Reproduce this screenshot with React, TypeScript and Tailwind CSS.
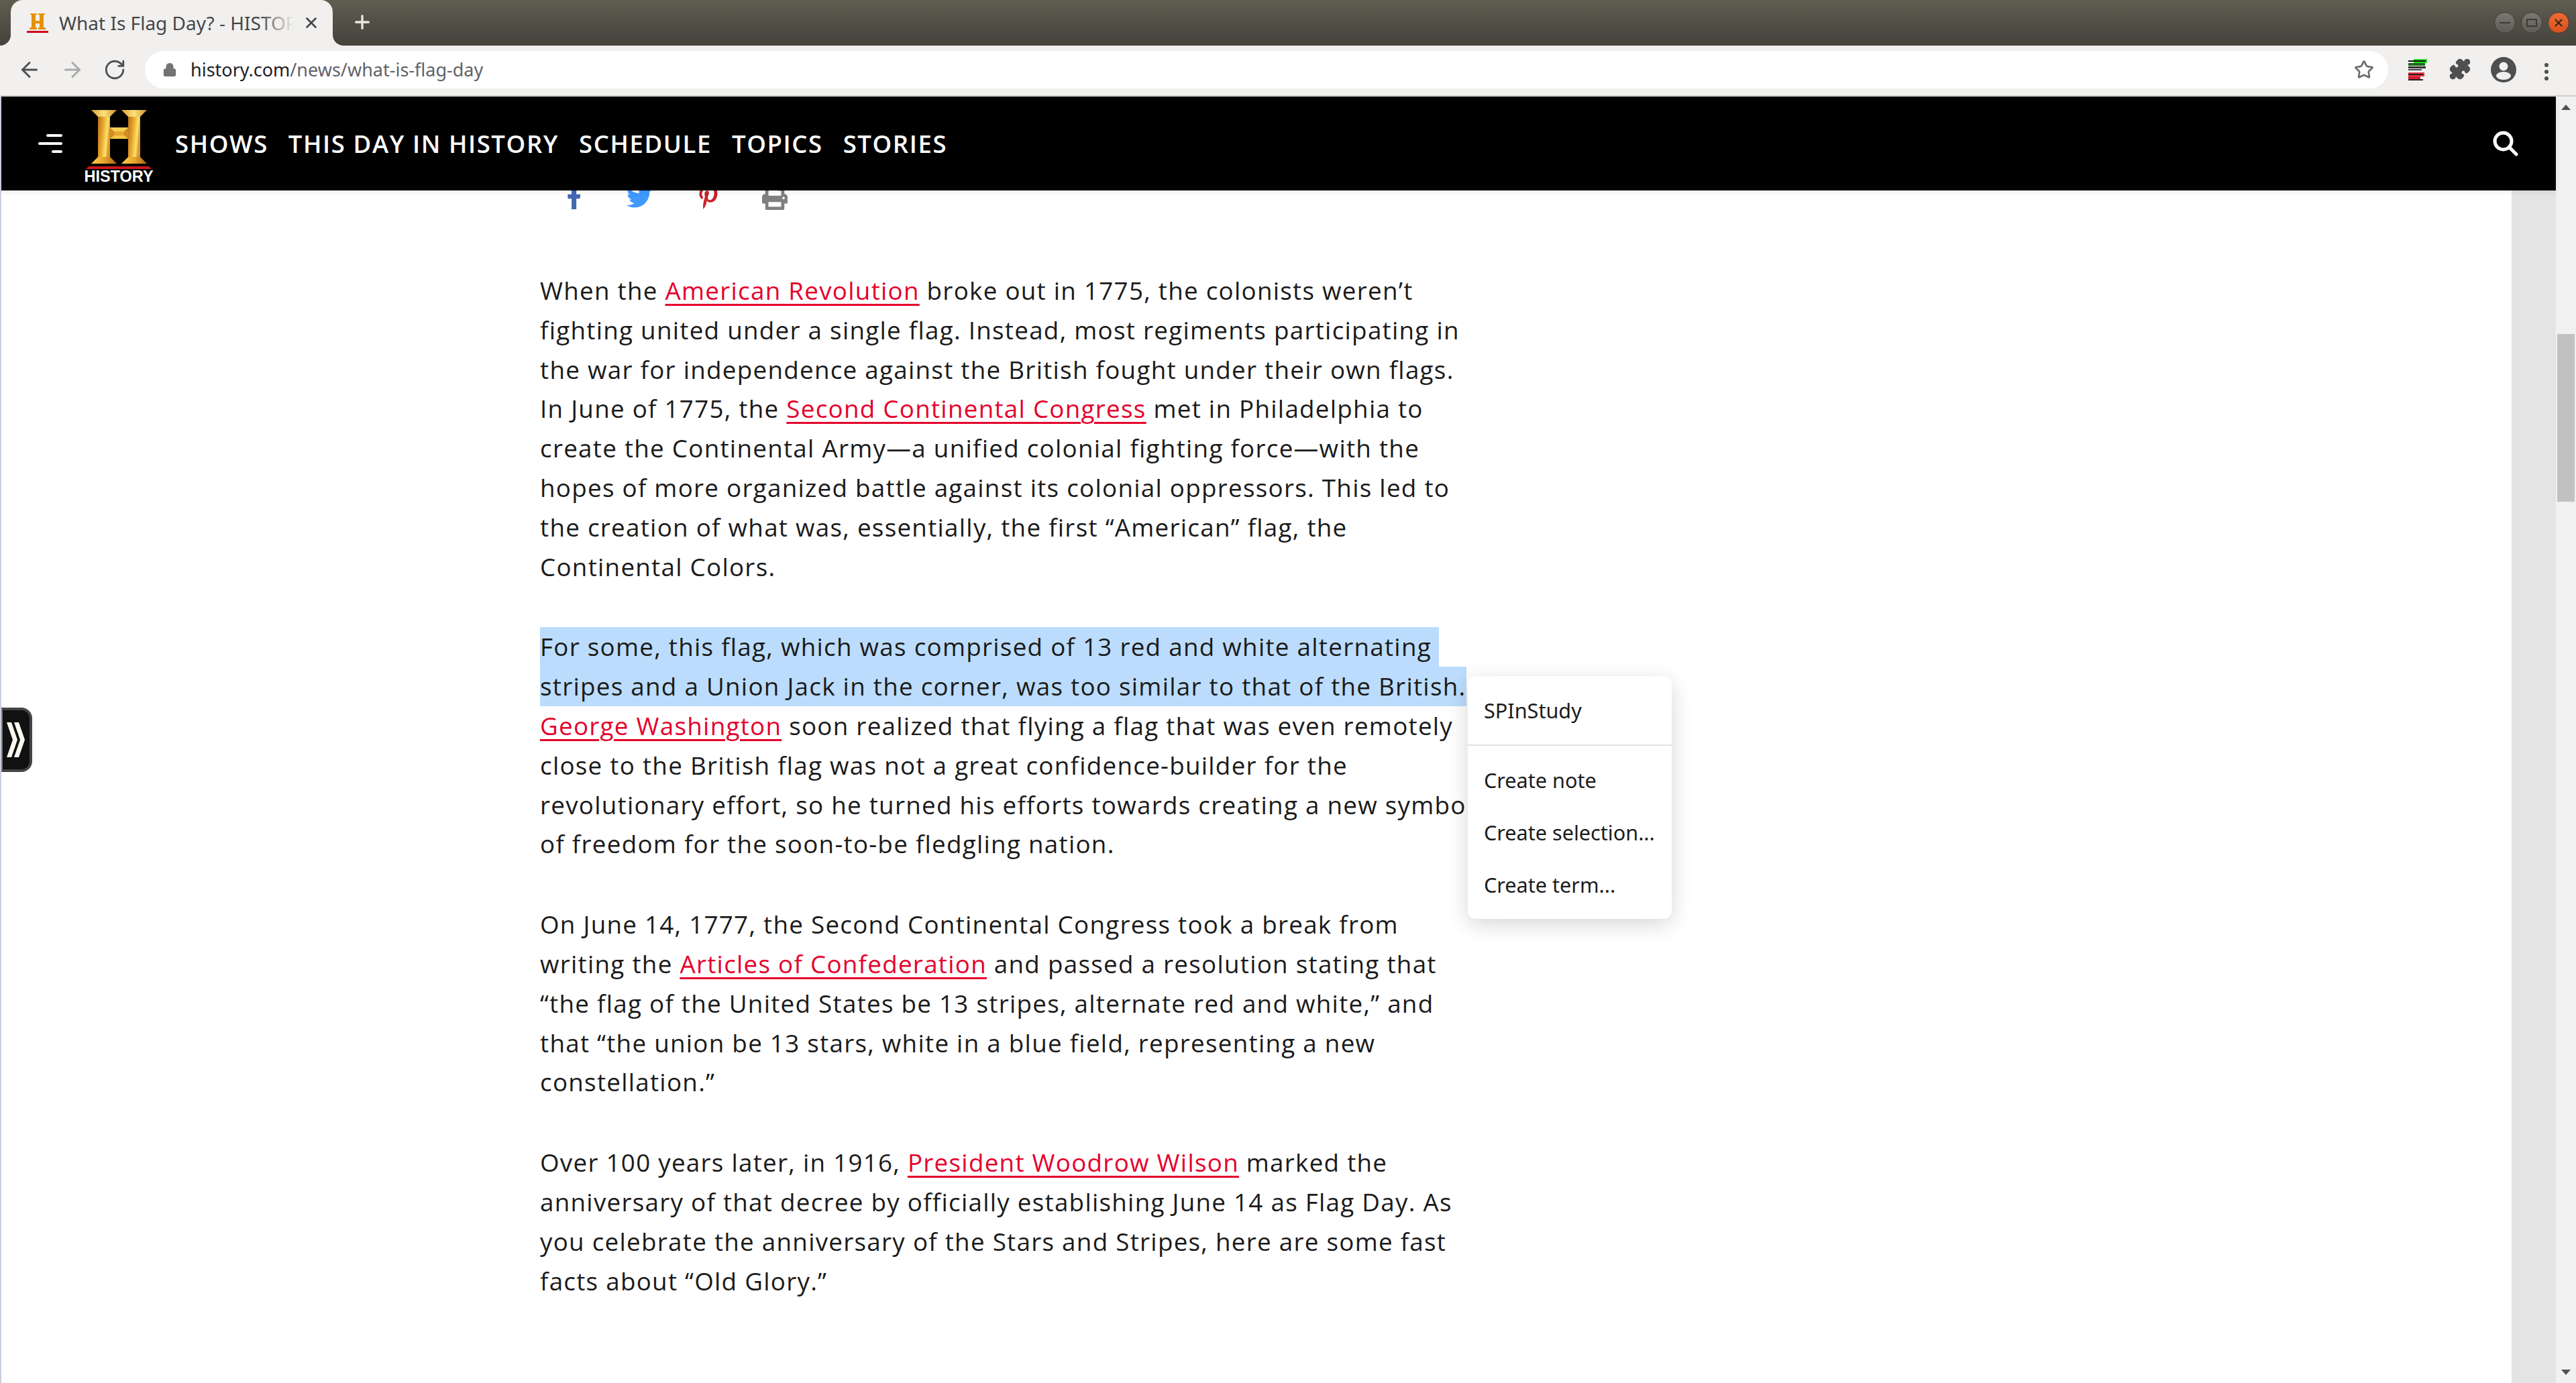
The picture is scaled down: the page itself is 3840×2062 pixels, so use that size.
import React from "react";
import { ArrowLeft, ArrowRight, RotateCw, Star, Plus, X, Lock, Puzzle } from "lucide-react";
import { FaFacebookF, FaTwitter, FaPinterestP, FaPrint } from "react-icons/fa";

const A = ({ children }: { children: React.ReactNode }) => (
  <a className="text-[#e4002b] underline decoration-[3px] underline-offset-[6px]">{children}</a>
);

function HistoryLogo() {
  return (
    <div className="flex flex-col items-center w-[106px]">
      <svg width="83" height="80" viewBox="0 0 83 80">
        <defs>
          <linearGradient id="stem" x1="0" y1="0" x2="1" y2="0.3">
            <stop offset="0" stopColor="#b8701a" />
            <stop offset="0.45" stopColor="#e8a62c" />
            <stop offset="0.8" stopColor="#fbe36a" />
            <stop offset="1" stopColor="#d9962a" />
          </linearGradient>
          <linearGradient id="top" x1="0" y1="0" x2="1" y2="0">
            <stop offset="0" stopColor="#e0a030" />
            <stop offset="0.5" stopColor="#fbe27a" />
            <stop offset="1" stopColor="#d08f2a" />
          </linearGradient>
          <linearGradient id="bot" x1="0" y1="0" x2="1" y2="0">
            <stop offset="0" stopColor="#fbd04a" />
            <stop offset="0.5" stopColor="#e8a52c" />
            <stop offset="1" stopColor="#a8651c" />
          </linearGradient>
        </defs>
        <polygon points="28,26 55,26 55,43 28,43" fill="#d28c24" />
        <polygon points="28,26 55,26 49,32 34,32" fill="#f6cf55" />
        <polygon points="34,38 49,38 55,43 28,43" fill="#f4c644" />
        <polygon points="34,32 49,32 49,38 34,38" fill="#e8a62c" />
        <rect x="10" y="10" width="18" height="60" fill="url(#stem)" />
        <rect x="55" y="10" width="18" height="60" fill="url(#stem)" />
        <polygon points="0,0 38,0 28,10 10,10" fill="url(#top)" />
        <polygon points="45,0 83,0 73,10 55,10" fill="url(#top)" />
        <polygon points="10,70 28,70 38,80 0,80" fill="url(#bot)" />
        <polygon points="55,70 73,70 83,80 45,80" fill="url(#bot)" />
      </svg>
      <svg width="98" height="4" viewBox="0 0 98 4" className="mt-1 block">
        <polygon points="4,0 94,0 98,4 0,4" fill="#c8171c" />
      </svg>
      <span className="font-['Liberation_Sans',sans-serif] font-bold text-[23.5px] leading-[20px] mt-[1px] text-white">HISTORY</span>
    </div>
  );
}

function NavBar() {
  return (
    <div className="relative z-10 h-[140px] shrink-0 bg-black flex items-center shadow-[0_4px_8px_rgba(0,0,0,0.06)]">
      <div className="ml-[55px] w-[36px] flex flex-col items-end gap-[8px]">
        <div className="h-[4px] w-[24px] rounded-full bg-white" />
        <div className="h-[4px] w-[36px] rounded-full bg-white" />
        <div className="h-[4px] w-[16px] rounded-full bg-white" />
      </div>
      <div className="ml-[31px] mt-[8px]">
        <HistoryLogo />
      </div>
      <nav className="ml-[31px] flex gap-[30px] font-['Open_Sans',sans-serif] font-semibold text-[36.5px] tracking-[1.6px] text-white">
        <span>SHOWS</span>
        <span>THIS DAY IN HISTORY</span>
        <span>SCHEDULE</span>
        <span>TOPICS</span>
        <span>STORIES</span>
      </nav>
      <svg className="ml-auto mr-[56px]" width="38" height="38" viewBox="0 0 38 38" fill="none" stroke="#fff" strokeLinecap="round">
        <circle cx="15.5" cy="15.5" r="12.5" strokeWidth="5" />
        <line x1="26" y1="26" x2="35" y2="35" strokeWidth="5" />
      </svg>
    </div>
  );
}

function TabStrip() {
  return (
    <div className="h-[68px] shrink-0 flex items-end bg-gradient-to-b from-[#605d50] to-[#44433c] font-['Noto_Sans',sans-serif]">
      <div className="relative ml-[16px] w-[480px] h-[68px] bg-[#f1f0ee] rounded-t-[18px] flex items-center">
        <svg className="absolute -left-[16px] bottom-0" width="16" height="16" viewBox="0 0 16 16">
          <path d="M16 0 V16 H0 A16 16 0 0 0 16 0 Z" fill="#f1f0ee" />
        </svg>
        <svg className="absolute -right-[16px] bottom-0" width="16" height="16" viewBox="0 0 16 16">
          <path d="M0 0 V16 H16 A16 16 0 0 1 0 0 Z" fill="#f1f0ee" />
        </svg>
        <svg className="ml-[24px] shrink-0" width="32" height="32" viewBox="0 0 32 32">
          <path d="M5 2 H15 V4 H13 V13 H19 V4 H17 V2 H27 V4 H25 V23 H28 V26 H17 V23 H19 V17 H13 V23 H15 V26 H4 V23 H7 V4 H5 Z" fill="#e39208" />
          <rect x="0" y="28" width="32" height="3" fill="#d0021b" />
        </svg>
        <div className="relative ml-[16px] w-[350px] overflow-hidden whitespace-nowrap text-[28px] text-[#45464a]">
          What Is Flag Day? - HISTORY
          <div className="absolute inset-y-0 right-0 w-[50px] bg-gradient-to-r from-transparent to-[#f1f0ee]" />
        </div>
        <X className="absolute left-[435px] top-[21px] w-[26px] h-[26px] text-[#45464a]" strokeWidth={2.5} />
      </div>
      <Plus className="ml-[28px] mb-[19px] w-[32px] h-[32px] text-[#e8e8e4]" strokeWidth={2.5} />
      <div className="ml-auto mr-[10px] mb-[18px] flex gap-[8px]">
        <div className="w-[32px] h-[32px] rounded-full bg-gradient-to-b from-[#7b7a72] to-[#5b5a53] border border-[#3e3d37] flex items-center justify-center">
          <div className="w-[16px] h-[2px] bg-[#3a3934]" />
        </div>
        <div className="w-[32px] h-[32px] rounded-full bg-gradient-to-b from-[#7b7a72] to-[#5b5a53] border border-[#3e3d37] flex items-center justify-center">
          <div className="w-[16px] h-[12px] border-2 border-[#3a3934]" />
        </div>
        <div className="w-[32px] h-[32px] rounded-full bg-gradient-to-b from-[#ee6a35] to-[#d9501f] border border-[#3e3d37] flex items-center justify-center">
          <X className="w-[18px] h-[18px] text-[#3a2a1a]" strokeWidth={3} />
        </div>
      </div>
    </div>
  );
}

function Toolbar() {
  return (
    <div className="h-[76px] shrink-0 bg-[#f1f0ee] border-b-2 border-[#cfcfcd] flex items-start pt-[8px] font-['Noto_Sans',sans-serif]">
      <div className="w-[216px] flex items-center h-[56px] shrink-0">
        <ArrowLeft className="ml-[26px] w-[36px] h-[36px] text-[#4f5054]" strokeWidth={2} />
        <ArrowRight className="ml-[28px] w-[36px] h-[36px] text-[#a9a9a9]" strokeWidth={2} />
        <RotateCw className="ml-[28px] w-[34px] h-[34px] text-[#4f5054]" strokeWidth={2} />
      </div>
      <div className="w-[3344px] h-[56px] bg-white rounded-full flex items-center shrink-0">
        <Lock className="ml-[26px] w-[22px] h-[22px] text-[#737373] fill-[#737373]" strokeWidth={2} />
        <span className="ml-[20px] text-[27px] text-[#202124]">
          history.com<span className="text-[#5f6368]">/news/what-is-flag-day</span>
        </span>
        <Star className="ml-auto mr-[21px] w-[30px] h-[30px] text-[#6e6e6e]" strokeWidth={2.2} />
      </div>
      <div className="flex-1 h-[56px] flex items-center relative">
        <svg className="absolute left-[30px] top-[12px]" width="30" height="32" viewBox="0 0 30 32">
          <rect x="8" y="0" width="20" height="6" fill="#22dd22" />
          <rect x="0" y="2" width="26" height="2" fill="#111" />
          <rect x="0" y="6" width="25" height="4" fill="#1a6b1a" />
          <rect x="0" y="11" width="26" height="3" fill="#333" />
          <rect x="0" y="15" width="20" height="2" fill="#444" />
          <rect x="0" y="20" width="24" height="6" fill="#f03040" />
          <rect x="0" y="22" width="22" height="2" fill="#222" />
          <rect x="0" y="26" width="18" height="5" fill="#d02030" />
          <rect x="0" y="30" width="22" height="2" fill="#222" />
        </svg>
        <Puzzle className="absolute left-[90px] top-[10px] w-[34px] h-[34px] text-[#4f4f4f] fill-[#4f4f4f]" strokeWidth={1.5} />
        <svg className="absolute left-[153px] top-[9px]" width="38" height="38" viewBox="0 0 38 38">
          <circle cx="19" cy="19" r="19" fill="#4f4f4f" />
          <circle cx="19" cy="14" r="6.5" fill="#f1f0ee" />
          <ellipse cx="19" cy="28" rx="11" ry="6" fill="#f1f0ee" />
        </svg>
        <div className="absolute left-[233px] top-[18px] flex flex-col gap-[4px]">
          <div className="w-[6px] h-[6px] rounded-full bg-[#4f4f4f]" />
          <div className="w-[6px] h-[6px] rounded-full bg-[#4f4f4f]" />
          <div className="w-[6px] h-[6px] rounded-full bg-[#4f4f4f]" />
        </div>
      </div>
    </div>
  );
}

function Article() {
  return (
    <div className="flex-1 min-w-0 overflow-hidden bg-white">
      <div className="ml-[803px] -mt-[10px] flex items-center h-[40px] text-[36px]">
        <FaFacebookF className="ml-[33px] text-[#4267b2]" />
        <FaTwitter className="ml-[60px] text-[#4099ff] text-[38px]" />
        <FaPinterestP className="ml-[66px] text-[#c8232c]" />
        <FaPrint className="ml-[62px] text-[#808080] text-[38px]" />
      </div>
      <div className="ml-[803px] mt-[90px] w-[1400px] font-['Open_Sans',sans-serif] text-[36.75px] leading-[58.8px] tracking-[1.28px] text-[#1a1a1a] whitespace-nowrap">
        <p>
          When the <A>American Revolution</A> broke out in 1775, the colonists weren’t<br />
          fighting united under a single flag. Instead, most regiments participating in<br />
          the war for independence against the British fought under their own flags.<br />
          In June of 1775, the <A>Second Continental Congress</A> met in Philadelphia to<br />
          create the Continental Army—a unified colonial fighting force—with the<br />
          hopes of more organized battle against its colonial oppressors. This led to<br />
          the creation of what was, essentially, the first “American” flag, the<br />
          Continental Colors.
        </p>
        <p className="mt-[61px]">
          <span className="block w-[1340px] bg-[#bbdcfc]">For some, this flag, which was comprised of 13 red and white alternating</span>
          <span className="block w-[1381px] bg-[#bbdcfc]">stripes and a Union Jack in the corner, was too similar to that of the British.</span>
          <A>George Washington</A> soon realized that flying a flag that was even remotely<br />
          close to the British flag was not a great confidence-builder for the<br />
          revolutionary effort, so he turned his efforts towards creating a new symbol<br />
          of freedom for the soon-to-be fledgling nation.
        </p>
        <p className="mt-[61px]">
          On June 14, 1777, the Second Continental Congress took a break from<br />
          writing the <A>Articles of Confederation</A> and passed a resolution stating that<br />
          “the flag of the United States be 13 stripes, alternate red and white,” and<br />
          that “the union be 13 stars, white in a blue field, representing a new<br />
          constellation.”
        </p>
        <p className="mt-[61px]">
          Over 100 years later, in 1916, <A>President Woodrow Wilson</A> marked the<br />
          anniversary of that decree by officially establishing June 14 as Flag Day. As<br />
          you celebrate the anniversary of the Stars and Stripes, here are some fast<br />
          facts about “Old Glory.”
        </p>
      </div>
    </div>
  );
}

function SelectionMenu() {
  return (
    <div className="absolute left-[2186px] top-[864px] z-20 w-[304px] h-[362px] bg-white rounded-[12px] shadow-[0_8px_32px_rgba(0,0,0,0.16)] font-['Noto_Sans',sans-serif] text-[30.6px] text-[#1c1c1c]">
      <div className="h-[104px] pl-[24px] pt-[2px] flex items-center border-b-2 border-[#e2e2e2]">SPInStudy</div>
      <div className="pt-[13px] flex flex-col">
        <div className="h-[78px] pl-[24px] flex items-center">Create note</div>
        <div className="h-[78px] pl-[24px] flex items-center">Create selection...</div>
        <div className="h-[78px] pl-[24px] flex items-center">Create term...</div>
      </div>
    </div>
  );
}

export default function App() {
  return (
    <div className="w-[3840px] h-[2062px] overflow-hidden flex flex-col bg-white">
      <TabStrip />
      <Toolbar />
      <div className="relative flex-1 min-h-0 flex border-l-2 border-[#c9cfdc]">
        <div className="flex-1 min-w-0 flex flex-col">
          <NavBar />
          <div className="flex-1 min-h-0 flex">
            <Article />
            <div className="w-[66px] shrink-0 bg-[#e4e4e4]" />
          </div>
        </div>
        {/* scrollbar */}
        <div className="w-[30px] shrink-0 bg-[#f1f1f1] flex flex-col items-center relative">
          <svg className="mt-[12px]" width="14" height="8" viewBox="0 0 14 8"><polygon points="7,0 14,8 0,8" fill="#505050" /></svg>
          <div className="absolute left-[2px] top-[354px] w-[26px] h-[250px] bg-[#c1c1c1]" />
          <svg className="mt-auto mb-[12px]" width="14" height="8" viewBox="0 0 14 8"><polygon points="0,0 14,0 7,8" fill="#505050" /></svg>
        </div>
        {/* side tab */}
        <div className="absolute left-0 top-[911px] w-[46px] h-[96px] bg-[#111] border-l-2 border-l-[#777] border-y-4 border-r-4 border-[#444] rounded-r-[16px] flex items-center justify-center z-10">
          <svg width="28" height="52" viewBox="0 0 28 52">
            <polygon points="0,0 7,0 16,26 7,52 0,52 9,26" fill="#f8f8f0" />
            <polygon points="11,0 18,0 27,26 18,52 11,52 20,26" fill="#f8f8f0" />
          </svg>
        </div>
        <SelectionMenu />
      </div>
    </div>
  );
}
